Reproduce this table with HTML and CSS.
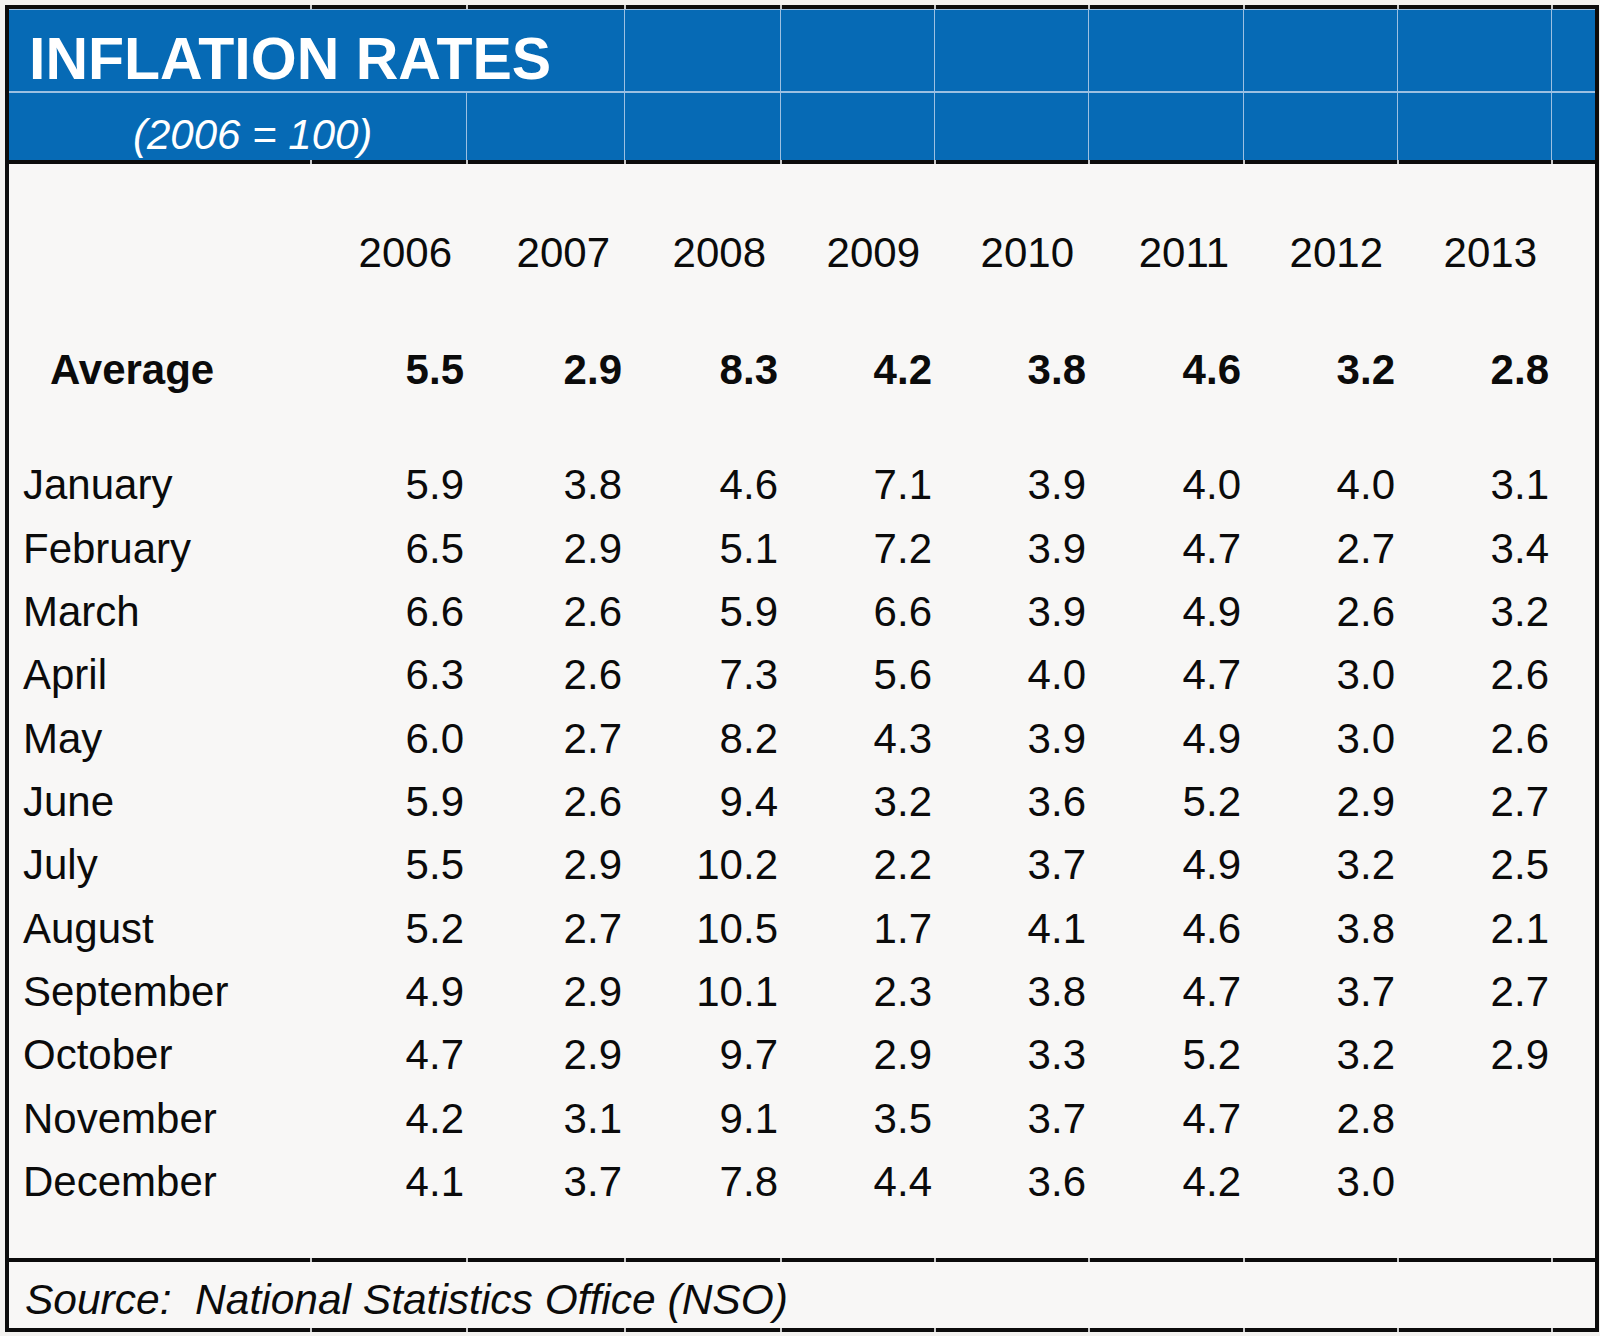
FILE: index.html
```html
<!DOCTYPE html>
<html lang="en">
<head>
<meta charset="utf-8">
<title>Inflation Rates</title>
<link rel="stylesheet" href="styles.css">
</head>
<body>
<main class="sheet">
  <div class="rule"><span></span><span></span><span></span><span></span><span></span><span></span><span></span><span></span><span></span><span></span></div>
  <header class="banner">
    <div class="cell title">INFLATION RATES</div>
    <div class="cell"></div><div class="cell"></div><div class="cell"></div><div class="cell"></div><div class="cell"></div><div class="cell"></div><div class="cell"></div>
    <div class="cell sub">(2006 = 100)</div>
    <div class="cell"></div><div class="cell"></div><div class="cell"></div><div class="cell"></div><div class="cell"></div><div class="cell"></div><div class="cell"></div><div class="cell"></div>
  </header>
  <div class="rule"><span></span><span></span><span></span><span></span><span></span><span></span><span></span><span></span><span></span><span></span></div>
  <section class="table">
    <div class="spacer s51"></div>
    <div class="row r63 years">
      <span class="label"></span><span class="year">2006</span><span class="year">2007</span><span class="year">2008</span><span class="year">2009</span><span class="year">2010</span><span class="year">2011</span><span class="year">2012</span><span class="year">2013</span><span></span>
    </div>
    <div class="spacer s52"></div>
    <div class="row r65 avg">
      <span class="label">Average</span><span class="num">5.5</span><span class="num">2.9</span><span class="num">8.3</span><span class="num">4.2</span><span class="num">3.8</span><span class="num">4.6</span><span class="num">3.2</span><span class="num">2.8</span><span></span>
    </div>
    <div class="spacer s52"></div>
    <div class="row month"><span class="label">January</span><span class="num">5.9</span><span class="num">3.8</span><span class="num">4.6</span><span class="num">7.1</span><span class="num">3.9</span><span class="num">4.0</span><span class="num">4.0</span><span class="num">3.1</span><span></span></div>
    <div class="row month"><span class="label">February</span><span class="num">6.5</span><span class="num">2.9</span><span class="num">5.1</span><span class="num">7.2</span><span class="num">3.9</span><span class="num">4.7</span><span class="num">2.7</span><span class="num">3.4</span><span></span></div>
    <div class="row month"><span class="label">March</span><span class="num">6.6</span><span class="num">2.6</span><span class="num">5.9</span><span class="num">6.6</span><span class="num">3.9</span><span class="num">4.9</span><span class="num">2.6</span><span class="num">3.2</span><span></span></div>
    <div class="row month"><span class="label">April</span><span class="num">6.3</span><span class="num">2.6</span><span class="num">7.3</span><span class="num">5.6</span><span class="num">4.0</span><span class="num">4.7</span><span class="num">3.0</span><span class="num">2.6</span><span></span></div>
    <div class="row month"><span class="label">May</span><span class="num">6.0</span><span class="num">2.7</span><span class="num">8.2</span><span class="num">4.3</span><span class="num">3.9</span><span class="num">4.9</span><span class="num">3.0</span><span class="num">2.6</span><span></span></div>
    <div class="row month"><span class="label">June</span><span class="num">5.9</span><span class="num">2.6</span><span class="num">9.4</span><span class="num">3.2</span><span class="num">3.6</span><span class="num">5.2</span><span class="num">2.9</span><span class="num">2.7</span><span></span></div>
    <div class="row month"><span class="label">July</span><span class="num">5.5</span><span class="num">2.9</span><span class="num">10.2</span><span class="num">2.2</span><span class="num">3.7</span><span class="num">4.9</span><span class="num">3.2</span><span class="num">2.5</span><span></span></div>
    <div class="row month"><span class="label">August</span><span class="num">5.2</span><span class="num">2.7</span><span class="num">10.5</span><span class="num">1.7</span><span class="num">4.1</span><span class="num">4.6</span><span class="num">3.8</span><span class="num">2.1</span><span></span></div>
    <div class="row month"><span class="label">September</span><span class="num">4.9</span><span class="num">2.9</span><span class="num">10.1</span><span class="num">2.3</span><span class="num">3.8</span><span class="num">4.7</span><span class="num">3.7</span><span class="num">2.7</span><span></span></div>
    <div class="row month"><span class="label">October</span><span class="num">4.7</span><span class="num">2.9</span><span class="num">9.7</span><span class="num">2.9</span><span class="num">3.3</span><span class="num">5.2</span><span class="num">3.2</span><span class="num">2.9</span><span></span></div>
    <div class="row month"><span class="label">November</span><span class="num">4.2</span><span class="num">3.1</span><span class="num">9.1</span><span class="num">3.5</span><span class="num">3.7</span><span class="num">4.7</span><span class="num">2.8</span><span class="num"></span><span></span></div>
    <div class="row month"><span class="label">December</span><span class="num">4.1</span><span class="num">3.7</span><span class="num">7.8</span><span class="num">4.4</span><span class="num">3.6</span><span class="num">4.2</span><span class="num">3.0</span><span class="num"></span><span></span></div>
    <div class="spacer s51"></div>
  </section>
  <div class="rule"><span></span><span></span><span></span><span></span><span></span><span></span><span></span><span></span><span></span><span></span></div>
  <footer class="source">Source:&nbsp; National Statistics Office (NSO)</footer>
  <div class="rule"><span></span><span></span><span></span><span></span><span></span><span></span><span></span><span></span><span></span><span></span></div>
</main>
</body>
</html>
```

FILE: styles.css
```css
html, body {
  margin: 0;
  padding: 0;
}

body {
  background: #f3f2f0;
  font-family: "Liberation Sans", Arial, sans-serif;
  color: #0b0b0b;
  height: 1336px;
  overflow: hidden;
}

.sheet {
  --cols: 301px 156px 158px 156px 154px 154px 155px 154px 154px 44px;
  margin: 5px 0 0 5px;
  width: 1586px;
  border-left: 4px solid #0c0c0c;
  border-right: 4px solid #0c0c0c;
  background: #f8f7f6;
}

/* black horizontal rules with faint grid gaps */
.rule {
  display: grid;
  grid-template-columns: var(--cols);
  height: 4px;
}
.rule span {
  background: #0c0c0c;
}
.rule span + span {
  border-left: 2px solid #c9c9c9;
}

/* blue banner */
.banner {
  display: grid;
  grid-template-columns: var(--cols);
  grid-template-rows: 83px 68px;
  background: #066ab5;
  border-top: 1px solid #9cc0e2;
  box-sizing: border-box;
  height: 151px;
}

.banner .cell {
  box-sizing: border-box;
  border-left: 1px solid #9cc0e2;
  color: #ffffff;
}

.banner .cell:nth-child(-n+8) {
  border-bottom: 2px solid #9cc0e2;
}

.banner .cell:nth-child(n+9) {
  border-bottom: 1px solid #9cc0e2;
}

.banner .title {
  grid-column: span 3;
  border-left: none;
  font-weight: bold;
  font-size: 59px;
  line-height: 59px;
  padding: 20px 0 0 20px;
  white-space: nowrap;
}

.banner .sub {
  grid-column: span 2;
  border-left: none;
  font-style: italic;
  font-size: 42px;
  line-height: 42px;
  padding: 21px 0 0 124px;
  white-space: nowrap;
}

/* data table */
.table {
  display: flex;
  flex-direction: column;
}

.spacer.s51 { height: 51px; }
.spacer.s52 { height: 52px; }

.row {
  display: grid;
  grid-template-columns: var(--cols);
  font-size: 42px;
  line-height: 42px;
}

.row.r63 { height: 63px; }
.row.r65 { height: 65px; }
.row.month { height: 63.33px; }

.row span {
  align-self: end;
  padding-bottom: 4px;
  white-space: nowrap;
}

.row .label {
  padding-left: 14px;
}

.row .num {
  text-align: right;
  padding-right: 2px;
}

.row .year {
  text-align: right;
  padding-right: 14px;
}

.row.avg {
  font-weight: bold;
}

.row.avg .label {
  padding-left: 41px;
}

/* source footer */
.source {
  height: 66px;
  box-sizing: border-box;
  padding: 17px 0 0 16px;
  font-size: 42.5px;
  line-height: 42px;
  font-style: italic;
  white-space: nowrap;
  overflow: hidden;
}
```
